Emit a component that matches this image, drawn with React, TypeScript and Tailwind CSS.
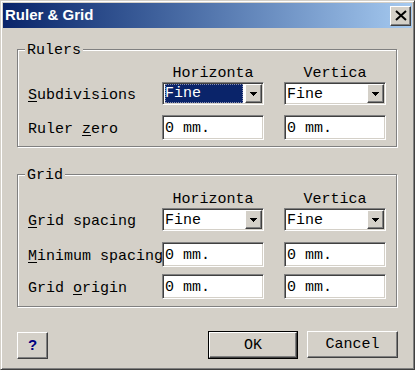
import React from 'react';

const sunken =
  'border border-t-[#808080] border-l-[#808080] border-b-white border-r-white shadow-[inset_1px_1px_0_#404040,inset_-1px_-1px_0_#d4d0c8] p-[1px]';
const raised =
  'border border-t-white border-l-white border-r-[#404040] border-b-[#404040] shadow-[inset_-1px_-1px_0_#808080]';

const cols = 'grid grid-cols-[114px_102px_102px] gap-x-[20px]';

const Arrow = () => (
  <svg width="7" height="4" viewBox="0 0 7 4">
    <path d="M0 0h7v1h-1v1h-1v1h-1v1h-1v-1h-1v-1h-1v-1h-1z" fill="#000" />
  </svg>
);

const Combo = ({ selected }: { selected?: boolean }) => (
  <div className={`h-[23px] flex bg-white ${sunken}`}>
    <div className="flex-1 flex items-center">
      {selected ? (
        <span className="flex-1 h-full m-[1px] mr-[2px] pt-[2px] flex items-center bg-[#0a246a] text-white outline outline-1 outline-dotted outline-[#8a8fb0] -outline-offset-1">
          Fine
        </span>
      ) : (
        <span className="pl-[1px] pt-[3px]">Fine</span>
      )}
    </div>
    <div className={`w-[17px] flex items-center justify-center bg-[#d4d0c8] ${raised}`}>
      <Arrow />
    </div>
  </div>
);

const Field = ({ value }: { value: string }) => (
  <div className={`h-[25px] flex items-center bg-white pl-[1px] ${sunken}`}>
    <span className="pl-[1px] pt-[3px]">{value}</span>
  </div>
);

const Row = ({ label, children, className = '' }: { label: React.ReactNode; children: React.ReactNode; className?: string }) => (
  <div className={`${cols} items-center ${className}`}>
    <span className="whitespace-nowrap leading-[17px] pt-[3px]">{label}</span>
    {children}
  </div>
);

const Header = () => (
  <div className={`${cols} h-[17px] leading-[17px]`}>
    <span />
    <span className="text-center">Horizonta</span>
    <span className="text-center">Vertica</span>
  </div>
);

const Group = ({ title, className, children }: { title: string; className: string; children: React.ReactNode }) => (
  <div
    className={`relative ml-[14px] w-[380px] border border-[#808080] shadow-[1px_1px_0_#fff,inset_1px_1px_0_#fff] pl-[10px] ${className}`}
  >
    <span className="absolute -top-[8px] left-[7px] px-[2px] bg-[#d4d0c8] leading-[17px]">{title}</span>
    {children}
  </div>
);

const U = ({ children }: { children: React.ReactNode }) => (
  <span className="underline underline-offset-[2px] decoration-1">{children}</span>
);

export default function App() {
  return (
    <div className="w-[415px] h-[370px] bg-[#d4d0c8] border border-t-[#d4d0c8] border-l-[#d4d0c8] border-r-[#404040] border-b-[#404040] shadow-[inset_1px_1px_0_#fff,inset_-1px_-1px_0_#808080] p-[2px] flex flex-col text-[15px] text-black font-['Liberation_Mono',monospace]">
      {/* Title bar */}
      <div className="h-[25px] flex items-center justify-between bg-gradient-to-r from-[#0a246a] to-[#a6caf0] pl-[2px] pr-[1px]">
        <span className="text-white font-bold text-[15px] font-['Liberation_Sans',sans-serif]">Ruler &amp; Grid</span>
        <div className={`w-[21px] h-[20px] flex items-center justify-center bg-[#d4d0c8] ${raised}`}>
          <svg width="12" height="11" viewBox="0 0 12 11">
            <path d="M1 1L11 10M11 1L1 10" stroke="#000" strokeWidth="2" />
          </svg>
        </div>
      </div>

      {/* Rulers */}
      <Group title="Rulers" className="mt-[21px] h-[98px] pt-[15px]">
        <Header />
        <Row label={<><U>S</U>ubdivisions</>}>
          <Combo selected />
          <Combo />
        </Row>
        <Row label={<>Ruler <U>z</U>ero</>} className="mt-[10px]">
          <Field value="0 mm." />
          <Field value="0 mm." />
        </Row>
      </Group>

      {/* Grid */}
      <Group title="Grid" className="mt-[27px] h-[133px] pt-[16px]">
        <Header />
        <Row label={<><U>G</U>rid spacing</>}>
          <Combo />
          <Combo />
        </Row>
        <Row label={<><U>M</U>inimum spacing</>} className="mt-[11px]">
          <Field value="0 mm." />
          <Field value="0 mm." />
        </Row>
        <Row label={<>Grid <U>o</U>rigin</>} className="mt-[7px]">
          <Field value="0 mm." />
          <Field value="0 mm." />
        </Row>
      </Group>

      {/* Buttons */}
      <div className="mt-[24px] px-[14px] flex items-center justify-between">
        <div className={`w-[31px] h-[27px] flex items-center justify-center bg-[#d4d0c8] ${raised}`}>
          <span className="text-[#000080] font-bold text-[15px] font-['Liberation_Sans',sans-serif]">?</span>
        </div>
        <div className="flex gap-[9px]">
          <div className="w-[90px] h-[28px] border border-black flex">
            <div className={`flex-1 flex items-center justify-center pt-[2px] bg-[#d4d0c8] ${raised}`}>OK</div>
          </div>
          <div className={`w-[91px] h-[27px] flex items-center justify-center pt-[2px] bg-[#d4d0c8] ${raised}`}>Cancel</div>
        </div>
      </div>
    </div>
  );
}
